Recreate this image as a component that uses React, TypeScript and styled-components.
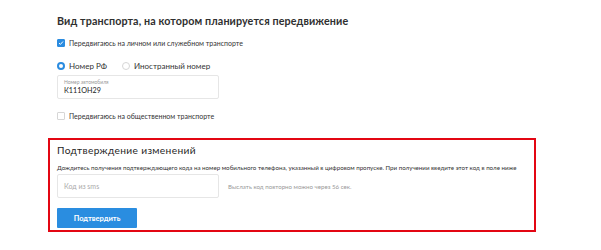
import React from "react";
import styled, { createGlobalStyle } from "styled-components";

const Global = createGlobalStyle`
  html, body { margin: 0; padding: 0; background: #fff; }
  body { font-family: Lato, "Open Sans", sans-serif; color: #333; }
  * { box-sizing: border-box; }
`;

const Page = styled.div`
  width: 601px;
  padding: 13px 0 0 48px;
`;

const Section = styled.div`
  width: 488px;
  padding: 0 9px;
  display: flex;
  flex-direction: column;
`;

const Title = styled.h2<{ $light?: boolean }>`
  margin: 0;
  font-size: ${(p) => (p.$light ? "10.2px" : "10.75px")};
  line-height: 16px;
  font-weight: ${(p) => (p.$light ? 400 : 700)};
  color: ${(p) => (p.$light ? "#1f1f1f" : "#2f2f2f")};
  letter-spacing: ${(p) => (p.$light ? "0.35px" : "0.1px")};
`;

const OptionRow = styled.div<{ $mt: number }>`
  display: flex;
  align-items: center;
  height: 16px;
  margin-top: ${(p) => p.$mt}px;
  gap: 15px;
`;

const Option = styled.label<{ $size?: number }>`
  display: flex;
  align-items: center;
  gap: 4px;
  font-size: ${(p) => p.$size ?? 7}px;
  color: #333;
`;

const Box = styled.span<{ $checked?: boolean }>`
  width: 8px;
  height: 8px;
  border-radius: 1px;
  display: inline-flex;
  align-items: center;
  justify-content: center;
  background: ${(p) => (p.$checked ? "#2b8ce0" : "#fff")};
  border: 1px solid ${(p) => (p.$checked ? "#2b8ce0" : "#d6d6d6")};
`;

const Radio = styled.span<{ $checked?: boolean }>`
  width: 8px;
  height: 8px;
  border-radius: 50%;
  background: #fff;
  border: ${(p) => (p.$checked ? "2.5px solid #2b8ce0" : "1px solid #d6d6d6")};
`;

const Field = styled.div<{ $mt: number }>`
  width: 162px;
  height: 24px;
  margin-top: ${(p) => p.$mt}px;
  border: 1px solid #e6e6e6;
  border-radius: 2px;
  padding: 3px 6px 0;
  display: flex;
  flex-direction: column;
`;

const FieldLabel = styled.span`
  font-size: 5px;
  line-height: 7px;
  color: #999;
`;

const FieldValue = styled.span`
  font-size: 7.2px;
  line-height: 10px;
  color: #222;
`;

const Confirm = styled.div`
  width: 488px;
  margin-top: 14px;
  border: 2px solid #e30613;
  padding: 2px 7px 2px;
  display: flex;
  flex-direction: column;
`;

const Hint = styled.p`
  margin: 6px 0 0;
  font-size: 6.2px;
  line-height: 8px;
  color: #333;
  white-space: nowrap;
`;

const CodeRow = styled.div`
  display: flex;
  align-items: center;
  gap: 9px;
  margin-top: 2px;
`;

const CodeInput = styled.div`
  width: 162px;
  height: 24px;
  border: 1px solid #e6e6e6;
  border-radius: 2px;
  padding: 0 6px;
  display: flex;
  align-items: center;
  font-size: 7px;
  color: #aaa;
`;

const Timer = styled.span`
  font-size: 6.15px;
  color: #999;
`;

const Button = styled.button`
  margin-top: 10px;
  width: 80px;
  height: 20px;
  border: none;
  border-radius: 1px;
  background: #2a8de0;
  color: #fff;
  font-family: Lato, "Open Sans", sans-serif;
  font-size: 7.5px;
  font-weight: 700;
  padding: 0;
`;

const Check = () => (
  <svg width="6" height="6" viewBox="0 0 6 6">
    <path d="M1 3.1 L2.4 4.4 L5 1.5" stroke="#fff" strokeWidth="1" fill="none" />
  </svg>
);

export default function App() {
  return (
    <Page>
      <Global />
      <Section>
        <Title>Вид транспорта, на котором планируется передвижение</Title>
        <OptionRow $mt={6}>
          <Option>
            <Box $checked>
              <Check />
            </Box>
            Передвигаюсь на личном или служебном транспорте
          </Option>
        </OptionRow>
        <OptionRow $mt={7}>
          <Option $size={8}>
            <Radio $checked />
            Номер РФ
          </Option>
          <Option $size={8}>
            <Radio />
            Иностранный номер
          </Option>
        </OptionRow>
        <Field $mt={1}>
          <FieldLabel>Номер автомобиля</FieldLabel>
          <FieldValue>К111ОН29</FieldValue>
        </Field>
        <OptionRow $mt={9}>
          <Option>
            <Box />
            Передвигаюсь на общественном транспорте
          </Option>
        </OptionRow>
      </Section>
      <Confirm>
        <Title $light>Подтверждение изменений</Title>
        <Hint>
          Дождитесь получения подтверждающего кода на номер мобильного телефона, указанный в цифровом пропуске. При
          получении введите этот код в поле ниже
        </Hint>
        <CodeRow>
          <CodeInput>Код из sms</CodeInput>
          <Timer>Выслать код повторно можно через 56 сек.</Timer>
        </CodeRow>
        <Button>Подтвердить</Button>
      </Confirm>
    </Page>
  );
}
